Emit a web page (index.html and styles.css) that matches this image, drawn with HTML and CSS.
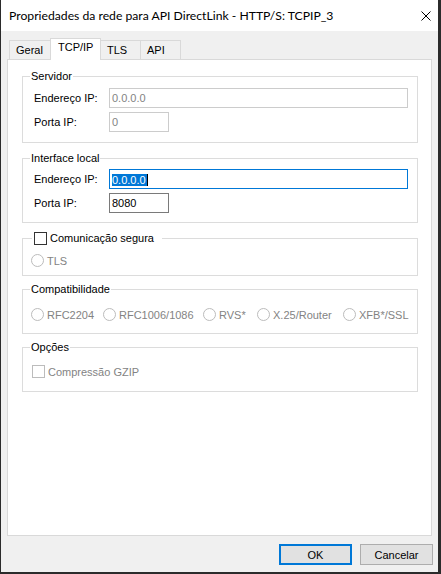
FILE: index.html
```html
<!DOCTYPE html>
<html lang="pt">
<head>
    <meta charset="UTF-8">
    <title>Propriedades da rede</title>
    <link rel="stylesheet" href="styles.css">
</head>
<body>
    <div class="dialog">
        <div class="titlebar">
            <span class="title">Propriedades da rede para API DirectLink - HTTP/S: TCPIP_3</span>
            <svg class="close" width="10" height="10" viewBox="0 0 10 10">
                <path d="M0.5 0.5 L9.5 9.5 M9.5 0.5 L0.5 9.5" stroke="#000" stroke-width="1" fill="none"/>
            </svg>
        </div>

        <div class="content">
            <div class="tabs">
                <div class="tab tab-geral">Geral</div>
                <div class="tab tab-tcp active">TCP/IP</div>
                <div class="tab tab-tls">TLS</div>
                <div class="tab tab-api">API</div>
            </div>

            <div class="page">
                <fieldset class="group">
                    <legend>Servidor</legend>
                    <div class="rows rows-server">
                        <span class="label">Endereço IP:</span>
                        <div class="field wide disabled">0.0.0.0</div>
                        <span class="label">Porta IP:</span>
                        <div class="field short disabled">0</div>
                    </div>
                </fieldset>

                <fieldset class="group group-spaced">
                    <legend>Interface local</legend>
                    <div class="rows rows-local">
                        <span class="label">Endereço IP:</span>
                        <div class="field wide focused"><span class="selection">0.0.0.0</span></div>
                        <span class="label">Porta IP:</span>
                        <div class="field short">8080</div>
                    </div>
                </fieldset>

                <fieldset class="group group-spaced">
                    <legend class="check-legend">
                        <span class="check"></span>
                        <span>Comunicação segura</span>
                    </legend>
                    <div class="option-row secure-row">
                        <span class="radio"></span>
                        <span class="muted">TLS</span>
                    </div>
                </fieldset>

                <fieldset class="group group-tight">
                    <legend>Compatibilidade</legend>
                    <div class="compat">
                        <div class="option"><span class="radio"></span><span class="muted">RFC2204</span></div>
                        <div class="option"><span class="radio"></span><span class="muted">RFC1006/1086</span></div>
                        <div class="option"><span class="radio"></span><span class="muted">RVS*</span></div>
                        <div class="option"><span class="radio"></span><span class="muted">X.25/Router</span></div>
                        <div class="option"><span class="radio"></span><span class="muted">XFB*/SSL</span></div>
                    </div>
                </fieldset>

                <fieldset class="group group-tight">
                    <legend>Opções</legend>
                    <div class="option-row options-row">
                        <span class="check disabled"></span>
                        <span class="muted">Compressão GZIP</span>
                    </div>
                </fieldset>
            </div>

            <div class="buttons">
                <button class="btn default">OK</button>
                <button class="btn">Cancelar</button>
            </div>
        </div>
    </div>
</body>
</html>
```

FILE: styles.css
```css
* {
    box-sizing: border-box;
}

body {
    margin: 0;
    background-color: #2b2b2b;
    font-family: "Liberation Sans", Arial, sans-serif;
    font-size: 11px;
    color: #000;
}

.dialog {
    margin-left: 1px;
    width: 437px;
    height: 572px;
    background-color: #f0f0f0;
}

/* title bar */
.titlebar {
    height: 31px;
    background-color: #fff;
    display: flex;
    align-items: center;
    padding-left: 8px;
}

.title {
    font-family: Lato, "Liberation Sans", sans-serif;
    font-size: 12.2px;
    color: #000;
}

.close {
    margin-left: auto;
    margin-right: 7px;
}

.content {
    padding: 7px 6px 0 6px;
}

/* tab strip */
.tabs {
    display: flex;
    align-items: flex-end;
    height: 21px;
    padding-left: 2px;
}

.tab {
    height: 19px;
    line-height: 18px;
    padding-left: 6px;
    border: 1px solid #d9d9d9;
    border-bottom: none;
    background-color: #f0f0f0;
    margin-right: -1px;
}

.tab-geral { width: 42px; }
.tab-tls { width: 41px; }
.tab-api { width: 41px; }

.tab.active {
    width: 51px;
    height: 22px;
    line-height: 17px;
    padding-left: 7px;
    background-color: #fff;
    margin-bottom: -1px;
    position: relative;
    z-index: 1;
}

/* tab page */
.page {
    height: 477px;
    background-color: #fff;
    border: 1px solid #d9d9d9;
    padding: 10px 13px 0 14px;
}

.group {
    margin: 0;
    padding: 0;
    min-width: 0;
    border: 1px solid #dcdcdc;
}

.group legend {
    margin-left: 7px;
    padding: 0 1px;
    line-height: 13px;
    height: 13px;
}

.group-spaced {
    margin-top: 9px;
}

.group-tight {
    margin-top: 7px;
}

.rows {
    display: grid;
    grid-template-columns: 75px auto;
    grid-auto-rows: 20px;
    row-gap: 4px;
    align-items: center;
    padding-left: 11px;
}

.rows-server {
    padding-top: 5px;
    padding-bottom: 10px;
}

.rows-local {
    padding-top: 4px;
    padding-bottom: 9px;
}

.field {
    height: 20px;
    border: 1px solid #7a7a7a;
    background-color: #fff;
    padding: 0 2px;
    line-height: 18px;
    white-space: nowrap;
    overflow: hidden;
}

.field.wide { width: 299px; }
.field.short { width: 60px; }

.field.disabled {
    border-color: #cccccc;
    color: #838383;
}

.field.focused {
    border-color: #0078d7;
}

.selection {
    display: inline-block;
    line-height: 12px;
    background-color: #0078d7;
    color: #fff;
    border-right: 1px solid #000;
    padding-right: 1px;
    vertical-align: middle;
}

/* check boxes and radio buttons */
.check {
    display: inline-block;
    width: 13px;
    height: 13px;
    border: 1px solid #333;
    background-color: #fff;
    flex: none;
}

.check.disabled {
    border-color: #bcbcbc;
}

.radio {
    display: inline-block;
    width: 13px;
    height: 13px;
    border: 1px solid #bcbcbc;
    border-radius: 50%;
    background-color: #fff;
    flex: none;
}

.muted {
    color: #838383;
}

.group .check-legend {
    display: flex;
    align-items: center;
    gap: 3px;
    margin-left: 9px;
    padding: 0 8px 0 2px;
}

.option-row {
    display: flex;
    align-items: center;
    gap: 3px;
    height: 13px;
}

.secure-row {
    margin: 9px 0 8px 8px;
}

.options-row {
    margin: 11px 0 13px 9px;
}

.compat {
    display: grid;
    grid-template-columns: 72px 100px 54px 86px auto;
    margin: 12px 0 12px 8px;
    height: 13px;
}

.option {
    display: flex;
    align-items: center;
    gap: 3px;
}

/* dialog buttons */
.buttons {
    display: flex;
    justify-content: flex-end;
    gap: 8px;
    margin-top: 8px;
    margin-right: -1px;
}

.btn {
    width: 73px;
    height: 21px;
    border: 1px solid #adadad;
    background-color: #e1e1e1;
    font-family: "Liberation Sans", Arial, sans-serif;
    font-size: 11px;
    color: #000;
    padding: 0;
}

.btn.default {
    border: 2px solid #0078d7;
}
```
